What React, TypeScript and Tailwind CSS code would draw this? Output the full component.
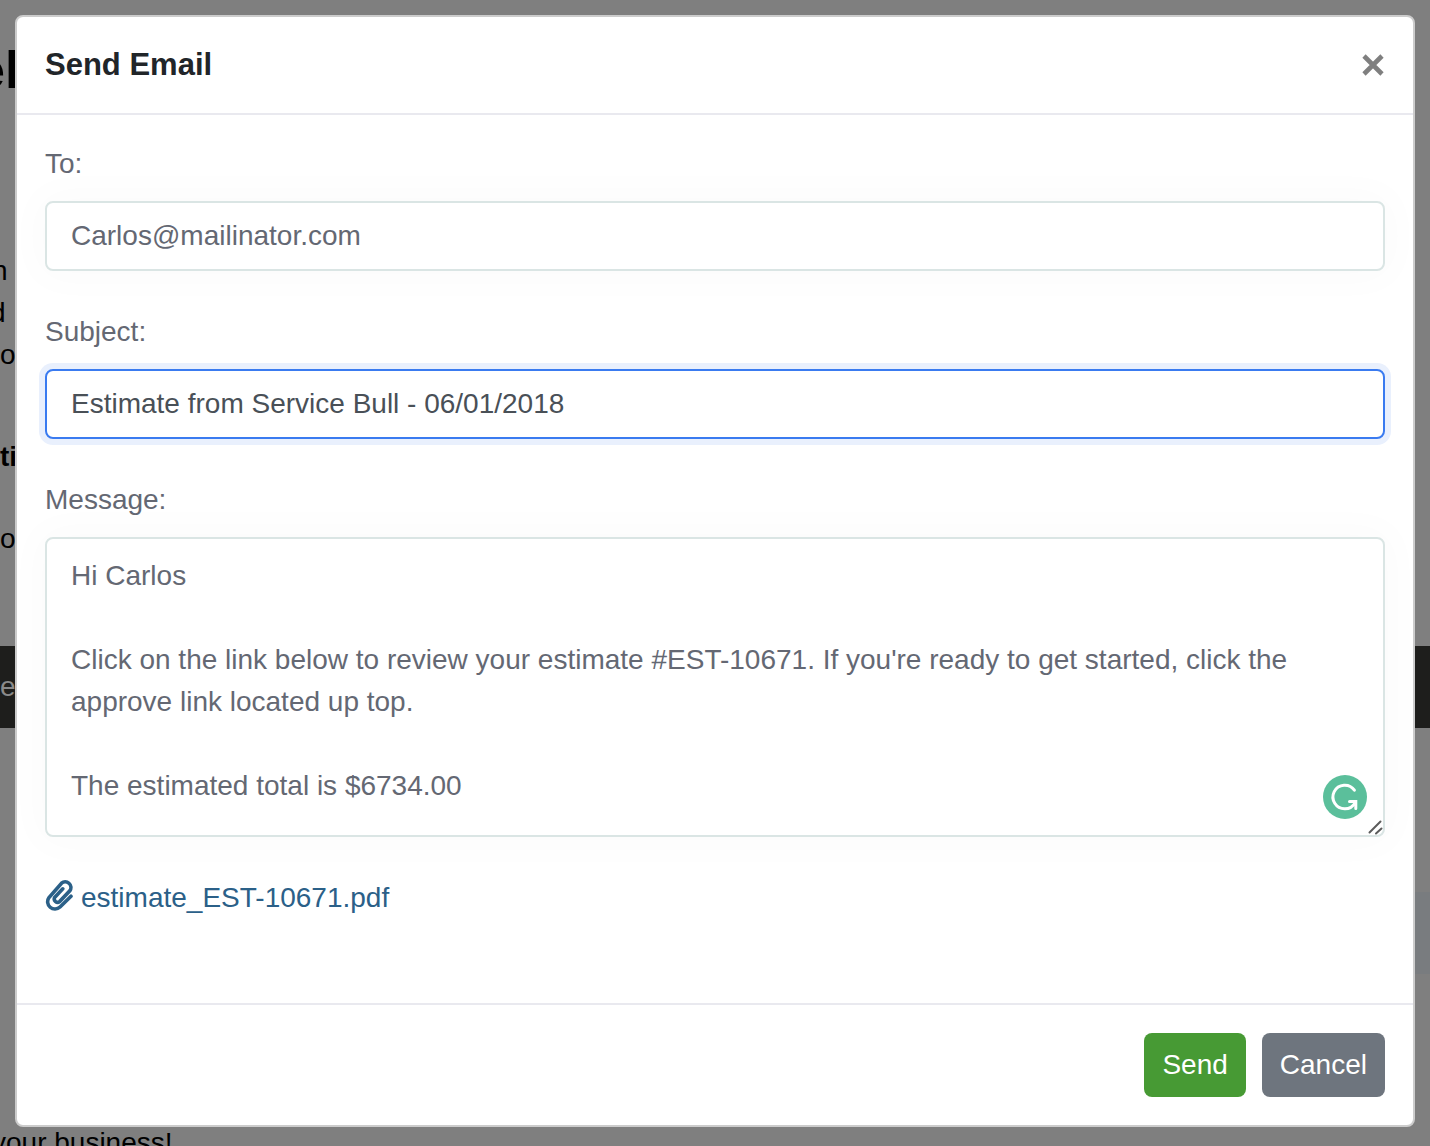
const message = `Hi Carlos

Click on the link below to review your estimate #EST-10671. If you're ready to get started, click the approve link located up top.

The estimated total is $6734.00`;

const fieldClass =
  "block w-full rounded-lg border-2 border-[#dae5e4] bg-white px-6 text-[28px] leading-[42px] text-[#646873] shadow-[0_0_40px_8px_rgba(0,0,0,0.02)] outline-none";

function PageBehind() {
  return (
    <div
      aria-hidden="true"
      className="flex h-full flex-col overflow-hidden whitespace-nowrap text-[28px] leading-[42px] text-black *:shrink-0"
    >
      <div className="flex h-[250px] justify-between">
        <span className="-ml-6 pt-10 text-[52px] leading-[60px] font-bold">el</span>
        <span className="-mt-8 -mr-1">ll</span>
      </div>
      <div className="-ml-2">n</div>
      <div className="-ml-2.5">d</div>
      <div className="h-[102px]">o</div>
      <div className="h-[82px] font-bold">ti</div>
      <div className="h-32">o</div>
      <div className="flex h-[82px] items-center bg-[#1e1e1c] text-[#8a8a8a]">e</div>
      <div className="mt-[164px] h-[82px] self-end bg-[#797c7f] pl-8" />
      <div className="-ml-2 pt-[148px]">your business!</div>
    </div>
  );
}

function Paperclip() {
  return (
    <svg viewBox="0 0 28 32" className="mb-1.5 h-8 w-7" aria-hidden="true">
      <path
        d="M26 17.2L15 28A7.3 7.3 0 0 1 4 18.5L16.5 4.2A5.7 5.7 0 0 1 25 11.6L14.6 22.6A3.3 3.3 0 0 1 9.6 18.6L17.8 9.8"
        fill="none"
        stroke="currentColor"
        strokeWidth="3.6"
        strokeLinecap="round"
      />
    </svg>
  );
}

function Grammarly() {
  return (
    <svg viewBox="0 0 44 44" className="size-11" aria-hidden="true">
      <circle cx="22" cy="22" r="22" fill="#5bbf9b" />
      <g fill="none" stroke="#fff" strokeWidth="3" strokeLinecap="round" strokeLinejoin="miter">
        <path d="M31.4 15.2A11.8 11.8 0 1 0 22 33.8C26.5 33.8 30 31.4 32.4 27.4" />
        <path d="M26.5 26.6H32.8V33.4" />
      </g>
    </svg>
  );
}

export default function App() {
  return (
    <div className="relative min-h-screen bg-[#7f7f7f] font-['Liberation_Sans',Arial,sans-serif]">
      <div className="absolute inset-0">
        <PageBehind />
      </div>
      <div className="relative p-[15px]">
        <div
          role="dialog"
          aria-modal="true"
          aria-labelledby="dialog-title"
          className="rounded-lg border-2 border-[#cccccc] bg-white text-[28px] leading-[42px] text-[#646873]"
        >
          <header className="flex h-[98px] items-center justify-between border-b-2 border-[#e9e9ef] px-7">
            <h1 id="dialog-title" className="text-[31px] font-bold text-[#212529]">
              Send Email
            </h1>
            <button type="button" aria-label="Close" className="cursor-pointer">
              <svg viewBox="0 0 24 24" className="size-6" aria-hidden="true">
                <path d="M3 3L21 21M21 3L3 21" stroke="#7f7f7f" strokeWidth="4.6" />
              </svg>
            </button>
          </header>

          <form onSubmit={(e) => e.preventDefault()}>
            <div className="flex flex-col gap-10 px-7 pt-7 pb-[84px]">
              <div className="flex flex-col gap-4">
                <label htmlFor="to">To:</label>
                <input id="to" type="text" defaultValue="Carlos@mailinator.com" className={`${fieldClass} py-3`} />
              </div>
              <div className="flex flex-col gap-4">
                <label htmlFor="subject">Subject:</label>
                <input
                  id="subject"
                  type="text"
                  defaultValue="Estimate from Service Bull - 06/01/2018"
                  className="block w-full rounded-lg border-2 border-[#3a7bf0] bg-white px-6 py-3 text-[28px] leading-[42px] text-[#495057] shadow-[0_0_0_6px_#e9f0fd] outline-none"
                />
              </div>
              <div className="flex flex-col gap-4">
                <label htmlFor="message">Message:</label>
                <div className="relative">
                  <textarea
                    id="message"
                    defaultValue={message}
                    className={`${fieldClass} h-[300px] resize-none overflow-hidden py-4`}
                  />
                  <div className="absolute right-[18px] bottom-[18px]">
                    <Grammarly />
                  </div>
                  <svg viewBox="0 0 16 16" className="absolute right-0.5 bottom-0.5 size-4" aria-hidden="true">
                    <path d="M2.5 13.5L13.5 2.5M9 14.5L14.5 9.5" stroke="#5c5c5c" strokeWidth="2" strokeLinecap="round" />
                  </svg>
                </div>
              </div>
              <a href="#attachment" className="flex items-center gap-2 self-start text-[#2b6088]">
                <Paperclip />
                estimate_EST-10671.pdf
              </a>
            </div>

            <footer className="flex justify-end gap-4 border-t-2 border-[#e9e9ef] p-7 text-white">
              <button type="submit" className="h-16 cursor-pointer rounded-lg bg-[#479a34] px-[18px]">
                Send
              </button>
              <button type="button" className="h-16 cursor-pointer rounded-lg bg-[#6e757e] px-[18px]">
                Cancel
              </button>
            </footer>
          </form>
        </div>
      </div>
    </div>
  );
}
